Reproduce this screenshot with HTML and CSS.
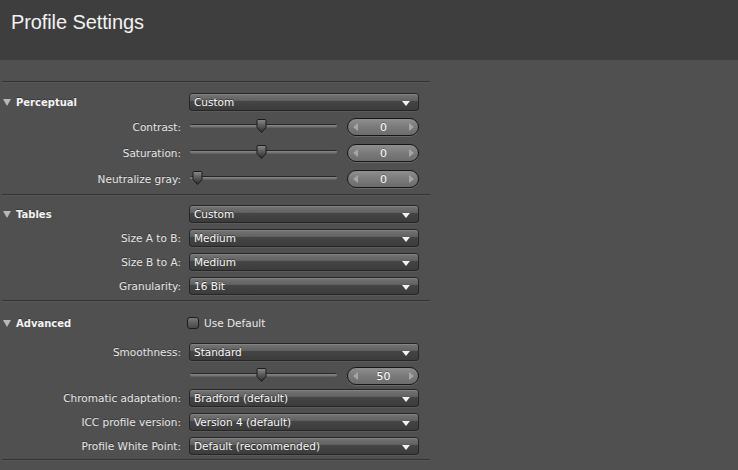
FILE: index.html
```html
<!DOCTYPE html>
<html>
<head>
<meta charset="utf-8">
<link rel="stylesheet" href="styles.css">
</head>
<body>
<div class="app">
  <header class="titlebar"><h1>Profile Settings</h1></header>
  <div class="panel">
    <div class="divider"></div>
    <section class="group g1">
      <div class="row head">
        <div class="label"><span class="tri"></span>Perceptual</div>
        <div class="ctl"><div class="select"><span>Custom</span><span class="caret"></span></div></div>
      </div>
      <div class="row srow">
        <div class="label">Contrast:</div>
        <div class="ctl sctl">
          <div class="slider"><div class="track"></div>
            <svg class="thumb" style="left:66px" width="11" height="15" viewBox="0 0 11 15"><defs><linearGradient id="tg1" x1="0" y1="0" x2="0" y2="1"><stop offset="0" stop-color="#8a8a8a"/><stop offset="0.45" stop-color="#5c5c5c"/><stop offset="1" stop-color="#2c2c2c"/></linearGradient></defs><path d="M1 1.5 Q1 0.5 2 0.5 H9 Q10 0.5 10 1.5 V8.5 L5.5 13.5 L1 8.5 Z" fill="url(#tg1)" stroke="#1b1b1b"/></svg>
          </div>
          <div class="stepper"><span class="al"></span><span class="val">0</span><span class="ar"></span></div>
        </div>
      </div>
      <div class="row srow">
        <div class="label">Saturation:</div>
        <div class="ctl sctl">
          <div class="slider"><div class="track"></div>
            <svg class="thumb" style="left:66px" width="11" height="15" viewBox="0 0 11 15"><path d="M1 1.5 Q1 0.5 2 0.5 H9 Q10 0.5 10 1.5 V8.5 L5.5 13.5 L1 8.5 Z" fill="url(#tg1)" stroke="#1b1b1b"/></svg>
          </div>
          <div class="stepper"><span class="al"></span><span class="val">0</span><span class="ar"></span></div>
        </div>
      </div>
      <div class="row srow">
        <div class="label">Neutralize gray:</div>
        <div class="ctl sctl">
          <div class="slider"><div class="track"></div>
            <svg class="thumb" style="left:2px" width="11" height="15" viewBox="0 0 11 15"><path d="M1 1.5 Q1 0.5 2 0.5 H9 Q10 0.5 10 1.5 V8.5 L5.5 13.5 L1 8.5 Z" fill="url(#tg1)" stroke="#1b1b1b"/></svg>
          </div>
          <div class="stepper"><span class="al"></span><span class="val">0</span><span class="ar"></span></div>
        </div>
      </div>
    </section>
    <div class="divider"></div>
    <section class="group g2">
      <div class="row head">
        <div class="label"><span class="tri"></span>Tables</div>
        <div class="ctl"><div class="select"><span>Custom</span><span class="caret"></span></div></div>
      </div>
      <div class="row">
        <div class="label">Size A to B:</div>
        <div class="ctl"><div class="select"><span>Medium</span><span class="caret"></span></div></div>
      </div>
      <div class="row">
        <div class="label">Size B to A:</div>
        <div class="ctl"><div class="select"><span>Medium</span><span class="caret"></span></div></div>
      </div>
      <div class="row">
        <div class="label">Granularity:</div>
        <div class="ctl"><div class="select"><span>16 Bit</span><span class="caret"></span></div></div>
      </div>
    </section>
    <div class="divider"></div>
    <section class="group g3">
      <div class="row head">
        <div class="label"><span class="tri"></span>Advanced</div>
        <div class="ctl"><label class="check"><span class="box"></span>Use Default</label></div>
      </div>
      <div class="row after-head">
        <div class="label">Smoothness:</div>
        <div class="ctl"><div class="select"><span>Standard</span><span class="caret"></span></div></div>
      </div>
      <div class="row srow tight-top">
        <div class="label"></div>
        <div class="ctl sctl">
          <div class="slider"><div class="track"></div>
            <svg class="thumb" style="left:66px" width="11" height="15" viewBox="0 0 11 15"><path d="M1 1.5 Q1 0.5 2 0.5 H9 Q10 0.5 10 1.5 V8.5 L5.5 13.5 L1 8.5 Z" fill="url(#tg1)" stroke="#1b1b1b"/></svg>
          </div>
          <div class="stepper"><span class="al"></span><span class="val">50</span><span class="ar"></span></div>
        </div>
      </div>
      <div class="row tighter-top">
        <div class="label">Chromatic adaptation:</div>
        <div class="ctl"><div class="select"><span>Bradford (default)</span><span class="caret"></span></div></div>
      </div>
      <div class="row">
        <div class="label">ICC profile version:</div>
        <div class="ctl"><div class="select"><span>Version 4 (default)</span><span class="caret"></span></div></div>
      </div>
      <div class="row">
        <div class="label">Profile White Point:</div>
        <div class="ctl"><div class="select"><span>Default (recommended)</span><span class="caret"></span></div></div>
      </div>
    </section>
    <div class="divider"></div>
  </div>
</div>
</body>
</html>
```

FILE: styles.css
```css
html, body {
  margin: 0;
  padding: 0;
  background: #505050;
}
body {
  width: 738px;
  height: 470px;
  overflow: hidden;
  font-family: "DejaVu Sans", "Liberation Sans", sans-serif;
  font-size: 10.5px;
  color: #e6e6e6;
}
.titlebar {
  height: 60px;
  background: #3e3e3e;
  box-sizing: border-box;
  padding: 10px 0 0 11px;
}
.titlebar h1 {
  margin: 0;
  font-family: "Liberation Sans", Arial, sans-serif;
  font-weight: normal;
  font-size: 20px;
  line-height: 24px;
  color: #f2f2f2;
  letter-spacing: -0.1px;
}
.panel {
  width: 430px;
  padding-top: 21px;
}
.divider {
  height: 1px;
  margin-left: 2px;
  background: #333333;
  box-shadow: 0 1px 0 #575757;
}
.group {
  display: flex;
  flex-direction: column;
  gap: 6px;
}
.g1 { padding: 11px 0 5px; }
.g2 { padding: 10px 0 5px; }
.g3 { padding: 13px 0 4px; }
.row {
  display: grid;
  grid-template-columns: 181px 230px;
  column-gap: 8px;
  align-items: center;
  height: 18px;
}
.row.srow { height: 20px; }
.row.after-head { margin-top: 5px; }
.row.tight-top { margin-top: -1px; }
.row.tighter-top { margin-top: -3px; }
.label {
  text-align: right;
  white-space: nowrap;
  color: #e8e8e8;
  text-shadow: 0 -1px 0 rgba(0,0,0,0.35);
}
.head .label {
  text-align: left;
  font-weight: bold;
  font-size: 10px;
  color: #f4f4f4;
  padding-left: 3px;
  display: flex;
  align-items: center;
}
.tri {
  width: 0;
  height: 0;
  border-left: 4px solid transparent;
  border-right: 4px solid transparent;
  border-top: 7px solid #b8b8b8;
  margin-right: 5px;
}
.ctl {
  display: flex;
  align-items: center;
  height: 100%;
}
.select {
  box-sizing: border-box;
  width: 230px;
  height: 18px;
  border: 1px solid #262626;
  border-radius: 3px;
  background: linear-gradient(to bottom, #747474 0%, #626262 40%, #454545 45%, #3c3c3c 100%);
  box-shadow: inset 0 1px 0 rgba(255,255,255,0.12), 0 1px 0 rgba(255,255,255,0.06);
  display: flex;
  align-items: center;
  justify-content: space-between;
  padding: 0 8px 0 4px;
  color: #fafafa;
  text-shadow: 0 -1px 0 rgba(0,0,0,0.45);
  line-height: 16px;
}
.caret {
  width: 0;
  height: 0;
  border-left: 4px solid transparent;
  border-right: 4px solid transparent;
  border-top: 5px solid #f2f2f2;
  margin-top: 2px;
}
.sctl {
  justify-content: space-between;
}
.slider {
  position: relative;
  width: 147px;
  height: 20px;
  margin-left: 1px;
}
.track {
  position: absolute;
  left: 0;
  right: 0;
  top: 7px;
  height: 4px;
  border-radius: 2px;
  background: linear-gradient(to bottom, #262626 0%, #262626 25%, #8a8a8a 25%, #6c6c6c 75%, #5a5a5a 100%);
}
.thumb {
  position: absolute;
  top: 2px;
}
.stepper {
  box-sizing: border-box;
  width: 72px;
  height: 18px;
  border: 1px solid #161616;
  border-radius: 9px;
  background: linear-gradient(to bottom, #8e8e8e 0%, #7a7a7a 50%, #6c6c6c 100%);
  box-shadow: 0 1px 0 #6a6a6a;
  display: flex;
  align-items: center;
  justify-content: space-between;
  padding: 0 4px 0 5px;
}
.al, .ar {
  width: 0;
  height: 0;
  border-top: 4px solid transparent;
  border-bottom: 4px solid transparent;
}
.al { border-right: 5px solid #a6a6a6; }
.ar { border-left: 5px solid #a6a6a6; }
.val {
  color: #ffffff;
  font-size: 11px;
  text-shadow: 0 -1px 0 rgba(0,0,0,0.3);
}
.check {
  display: flex;
  align-items: center;
  color: #e8e8e8;
}
.box {
  box-sizing: border-box;
  width: 12px;
  height: 12px;
  margin-left: -2px;
  margin-right: 5px;
  border: 1px solid #1c1c1c;
  border-radius: 3px;
  background: linear-gradient(to bottom, #7a7a7a 0%, #5e5e5e 50%, #4a4a4a 100%);
}
```
